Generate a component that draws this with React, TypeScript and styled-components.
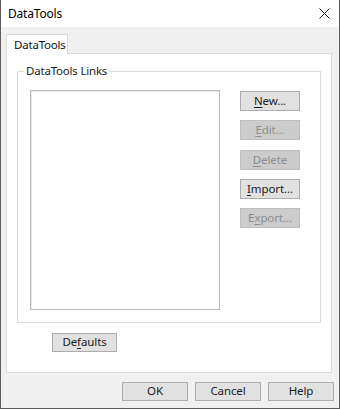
import React from "react";
import styled, { createGlobalStyle } from "styled-components";

const Global = createGlobalStyle`
  html, body { margin: 0; padding: 0; background: #f0f0f0; }
  body { font-family: "Noto Sans", "Open Sans", "DejaVu Sans", sans-serif; font-size: 12px; color: #000; }
  * { box-sizing: border-box; }
`;

const Window = styled.div`
  width: 340px;
  height: 409px;
  display: flex;
  flex-direction: column;
  background: #f0f0f0;
  border-left: 1px solid #5c5c5c;
  border-right: 1px solid #5c5c5c;
  border-bottom: 1px solid #5c5c5c;
`;

const TitleBar = styled.div`
  height: 27px;
  flex: none;
  background: #ffffff;
  display: flex;
  align-items: center;
  justify-content: space-between;
  padding: 0 9px 1px 7px;
`;

const Title = styled.span`
  font-size: 12px;
  color: #000;
  letter-spacing: -0.2px;
`;

const CloseIcon = styled.svg`
  width: 11px;
  height: 11px;
  margin-top: 1px;
`;

const Client = styled.div`
  flex: 1;
  display: flex;
  flex-direction: column;
  padding: 7px 0 0 5px;
`;

const TabStrip = styled.div`
  display: flex;
  height: 19px;
  position: relative;
  z-index: 1;
`;

const Tab = styled.div`
  width: 62px;
  height: 20px;
  background: #ffffff;
  border: 1px solid #d9d9d9;
  border-bottom: none;
  display: flex;
  align-items: center;
  padding: 0 0 1px 7px;
  font-size: 11.5px;
  letter-spacing: -0.2px;
  color: #111;
`;

const Panel = styled.div`
  width: 326px;
  height: 320px;
  background: #ffffff;
  border: 1px solid #d9d9d9;
  padding: 17px 10px 0 10px;
  display: flex;
  flex-direction: column;
`;

const Group = styled.div`
  position: relative;
  height: 252px;
  width: 304px;
  border: 1px solid #dcdcdc;
  padding: 18px 20px 12px 12px;
  display: flex;
  gap: 20px;
`;

const Legend = styled.span`
  position: absolute;
  left: 6px;
  top: -9px;
  padding: 0 2px;
  background: #ffffff;
  font-size: 11.5px;
  line-height: 16px;
  color: #1a1a1a;
  letter-spacing: -0.2px;
`;

const ListBox = styled.div`
  width: 190px;
  height: 220px;
  border: 1px solid #b9b9b9;
  background: #ffffff;
  box-shadow: inset 1px 1px 0 #e8e8e8;
`;

const ButtonColumn = styled.div`
  display: flex;
  flex-direction: column;
  gap: 9px;
  padding-top: 1px;
`;

const Btn = styled.button<{ $w?: number; $h?: number; $disabled?: boolean }>`
  width: ${(p) => p.$w ?? 60}px;
  height: ${(p) => p.$h ?? 20}px;
  margin: 0;
  padding: 0 0 1px 0;
  font-family: "Noto Sans", "Open Sans", "DejaVu Sans", sans-serif;
  font-size: 11.5px;
  letter-spacing: -0.1px;
  line-height: 1;
  display: flex;
  align-items: center;
  justify-content: center;
  background: ${(p) => (p.$disabled ? "#cccccc" : "#e1e1e1")};
  border: 1px solid ${(p) => (p.$disabled ? "#bfbfbf" : "#adadad")};
  color: ${(p) => (p.$disabled ? "#8c8c8c" : "#222222")};
  border-radius: 0;
  u { text-underline-offset: 2px; }
`;

const DefaultsRow = styled.div`
  padding: 10px 0 0 35px;
`;

const Footer = styled.div`
  display: flex;
  justify-content: flex-end;
  gap: 7px;
  padding: 9px 5px 0 0;
`;

export default function App() {
  return (
    <>
      <Global />
      <Window>
        <TitleBar>
          <Title>DataTools</Title>
          <CloseIcon viewBox="0 0 11 11">
            <path d="M0.5 0.5 L10.5 10.5 M10.5 0.5 L0.5 10.5" stroke="#1a1a1a" strokeWidth="1" fill="none" />
          </CloseIcon>
        </TitleBar>
        <Client>
          <TabStrip>
            <Tab>DataTools</Tab>
          </TabStrip>
          <Panel>
            <Group>
              <Legend>DataTools Links</Legend>
              <ListBox />
              <ButtonColumn>
                <Btn><span><u>N</u>ew...</span></Btn>
                <Btn $disabled><span><u>E</u>dit...</span></Btn>
                <Btn $disabled style={{ marginTop: 1 }}><span><u>D</u>elete</span></Btn>
                <Btn><span><u>I</u>mport...</span></Btn>
                <Btn $disabled><span>E<u>x</u>port...</span></Btn>
              </ButtonColumn>
            </Group>
            <DefaultsRow>
              <Btn $w={65} $h={19}><span>De<u>f</u>aults</span></Btn>
            </DefaultsRow>
          </Panel>
          <Footer>
            <Btn $w={66} $h={19}>OK</Btn>
            <Btn $w={66} $h={19}>Cancel</Btn>
            <Btn $w={66} $h={19}>Help</Btn>
          </Footer>
        </Client>
      </Window>
    </>
  );
}
